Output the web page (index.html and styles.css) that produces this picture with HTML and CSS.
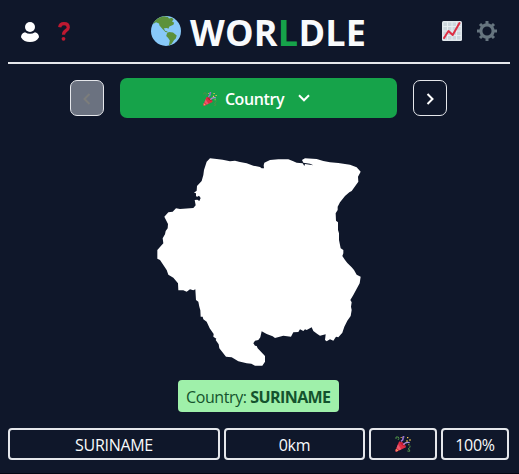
FILE: index.html
```html
<!DOCTYPE html>
<html lang="en">
<head>
<meta charset="utf-8">
<title>Worldle</title>
<link rel="stylesheet" href="styles.css">
</head>
<body>
<svg class="defs" aria-hidden="true">
  <symbol id="popper" viewBox="0 0 48 48">
    <path d="M12 17 1 44q0 3 3 3l29-13C33 27 21 15 12 17Z" fill="#dd2e44"/>
    <path d="m9 25-4 10 8 8 6-3ZM4 38l-3 6q0 3 3 3l5-2Z" fill="#ea596e"/>
    <path d="m3 40 5 5" stroke="#ffcc4d" stroke-width="3"/>
    <path d="M15 19c7 1 15 8 16 13-7-1-16-8-16-13Z" fill="#be1931"/>
    <path d="M18 16q7-4 6-9t4-6" fill="none" stroke="#9674cc" stroke-width="5"/>
    <path d="M3 9V3h7q4 4-1 9M37 45l7 1q2-6-5-7l6-5v-5" fill="none" stroke="#4f9148" stroke-width="3"/>
    <path d="M25 26q8-9 19-6" fill="none" stroke="#aa8ed6" stroke-width="4"/>
    <path d="M36 3h4v4h-4ZM43 10h4v4h-4ZM34 13h4v4h-4ZM17 3h3v3h-3ZM40 25h3v3h-3Z" fill="#ffcc4d"/>
  </symbol>
</svg>
<header class="header">
  <div class="actions">
    <svg class="user" viewBox="0 0 18 20"><circle cx="9" cy="5" r="5"/><path d="M4 10.200Q9 13.200 14 10.200C17 11 18 13.200 18 15.200C16 18.500 13 20 9 20S2 18.500 0 15.200C0 13 1 11 4 10.200Z"/></svg>
    <svg class="help" viewBox="0 0 12 19"><path d="M1.700 5.300C2 2.600 4 1.700 6 1.700c2.600 0 4.300 1.400 4.300 3.700C10.300 8.600 5.500 8.300 5.500 12.700"/><circle cx="5.500" cy="16.800" r="1.900"/></svg>
  </div>
  <h1 class="title">
    <svg class="globe" viewBox="0 0 30 30"><circle cx="15" cy="15" r="15" fill="#88c9f9"/><path d="M4.800 4Q8 .9 13 .2l4 .7 1 1.600 3-.7 1.500 2-1.600 1.500 2.200 1.400-.7 2-4 1.800-1 2.200-1.400-.8-3 .3 1 2.500 1.700.6 1.800 1.200-3-.6-3-2.800L8.500 9.500 8 7.500 5 6.300 1.900 8.200Q3 5.800 4.800 4ZM16 17.200l2-1.300 4 .7 3.700 3-.9 3-1.700 1.400-2.600 4-2.700 1.500 1-5-1.600-2.600-2-2Z" fill="#5c913b"/></svg>
    <span class="name">WOR<span class="accent">L</span>DLE</span>
  </h1>
  <div class="actions right">
    <svg class="chart" viewBox="0 0 20 20"><rect width="20" height="20" rx="1.500" fill="#e1e8ed"/><path d="M1.500 1.500h17v17h-17Z" fill="#ccd6dd"/><path d="M5.500 1v18M10 1v18M14.500 1v18M1 5.500h18M1 10h18M1 14.500h18" stroke="#e7edf1"/><path d="m2 17 4.500-7 4.200 4L17.500 2" fill="none" stroke="#dd2e44" stroke-width="2" stroke-linejoin="round" stroke-linecap="round"/></svg>
    <svg class="gear" viewBox="0 0 20 20"><path d="M10 0v4M10 16v4M0 10h4M16 10h4M3 3l2.800 2.800M14.200 14.200 17 17M3 17l2.800-2.800M14.200 5.800 17 3" stroke-width="3"/><circle cx="10" cy="10" r="6.100" stroke-width="3.100"/></svg>
  </div>
</header>
<main>
  <nav class="rounds">
    <button class="step disabled" aria-label="Previous"><svg viewBox="0 0 8 12"><path d="M6.500 1 1.500 6l5 5"/></svg></button>
    <button class="round"><svg class="party"><use href="#popper"/></svg><span class="round-name">Country</span><svg class="down" viewBox="0 0 12 8"><path d="m1 1.300 5 5 5-5"/></svg></button>
    <button class="step" aria-label="Next"><svg viewBox="0 0 8 12"><path d="m1.500 1 5 5-5 5"/></svg></button>
  </nav>
  <svg class="country" viewBox="0 0 648 660"><path d="M180 25 200 27 218 29 240 34 255 32 270 36 290 40 310 47 330 51 335 55 342 55 341 46 343 38 360 30 385 28 415 28 430 34 440 38 458 40 463 48 465 42 490 46 480 41 460 38 456 30 465 25 500 27 520 33 540 37 565 39 600 44 620 52 632 65 624 80 625 95 605 123 598 127 585 138 570 157 563 170 563 180 557 190 558 212 564 217 564 240 567 250 567 270 572 295 580 300 580 310 577 318 585 330 592 339 605 352 612 360 620 374 632 380 629 400 610 435 601 450 605 457 603 470 605 480 602 498 592 512 583 530 577 548 565 562 558 560 550 572 540 568 530 574 525 570 527 553 510 557 502 552 490 543 485 532 470 540 465 538 460 543 450 538 445 546 430 547 423 560 400 557 375 564 368 559 350 552 335 544 331 562 325 570 315 572 310 580 315 587 320 588 323 595 345 618 345 635 337 647 315 647 304 641 290 640 265 634 245 622 228 620 208 595 206 583 197 570 199 566 190 560 191 552 179 535 170 515 160 508 158 500 152 500 151 481 148 470 145 455 138 450 136 418 130 421 120 418 110 425 100 421 85 421 84 400 70 383 55 374 50 360 30 330 22 326 22 300 40 280 38 265 45 253 47 243 53 235 54 222 43 200 55 187 68 185 78 175 90 177 130 174 137 166 134 150 142 149 148 153 152 144 147 137 142 140 138 139 138 130 132 128 140 122 141 108 155 93 160 75 162 60 170 35Z"/></svg>
  <div class="answer">Country: <b>SURINAME</b></div>
  <div class="guess">
    <div class="cell place"><span>SURINAME</span></div>
    <div class="cell distance"><span>0km</span></div>
    <div class="cell"><svg class="party"><use href="#popper"/></svg></div>
    <div class="cell percent"><span>100%</span></div>
  </div>
</main>
</body>
</html>
```
FILE: styles.css
```css
* { box-sizing: border-box; }
html { background: #0f172a; }
body {
  margin: 0;
  height: 474px;
  padding: 0 9px 0 8px;
  overflow: hidden;
  border-bottom: 1px solid #030613;
  background: #0f172a;
  color: #f8fafc;
  font: 16px/24px "Open Sans", "Noto Sans", sans-serif;
}
.defs { position: absolute; width: 0; height: 0; }
svg { display: block; flex: none; }
.header {
  height: 64px;
  display: grid;
  grid-template-columns: 1fr auto 1fr;
  align-items: center;
  padding-right: 2px;
  border-bottom: 2px solid #e5e7eb;
}
.actions { display: flex; align-items: center; gap: 19px; padding-left: 13px; }
.actions.right { justify-content: flex-end; gap: 15px; padding: 0 11px 0 0; }
.user { width: 18px; height: 20px; margin-top: 2px; fill: #fff; }
.help { width: 12px; height: 19px; fill: none; stroke: #be1931; stroke-width: 3.2; }
.help circle { fill: #be1931; stroke: none; }
.title { display: flex; align-items: center; gap: 9px; margin: 0; font-size: 36px; line-height: 40px; font-weight: 700; }
.globe { width: 30px; height: 30px; }
.name { width: 175px; letter-spacing: .2px; white-space: nowrap; margin-top: 3px; }
.accent { color: #16a34a; }
.chart { width: 20px; height: 20px; }
.gear { width: 20px; height: 20px; fill: none; stroke: #66757f; }
.rounds { display: flex; justify-content: center; align-items: center; gap: 16px; margin-top: 14px; padding-right: 2px; }
button { font: inherit; color: #fff; padding: 0; }
.step {
  width: 34px;
  height: 36px;
  display: grid;
  place-items: center;
  border: 1px solid #e5e7eb;
  border-radius: 7px;
  background: transparent;
}
.step svg { width: 8px; height: 12px; margin-top: 2px; }
.step path, .down path { fill: none; stroke: #fff; stroke-width: 2; }
.step.disabled { background: #6b7280; }
.step.disabled path { stroke: #7c7d7b; }
.round {
  width: 277px;
  height: 40px;
  display: flex;
  align-items: center;
  justify-content: center;
  padding-right: 4px;
  border: 0;
  border-radius: 7px;
  background: #16a34a;
  font-weight: 600;
}
.round .party { width: 14px; height: 14px; margin: 1px 8px 0 0; }
.round-name { width: 60px; white-space: nowrap; margin-top: 2px; letter-spacing: -.4px; }
.down { width: 12px; height: 8px; margin: 0 0 1px 13px; }
.country { width: 216px; height: 220px; margin: 32px 0 0 142px; fill: #fff; }
.answer {
  width: 161px;
  height: 32px;
  margin: 10px 0 0 170px;
  padding: 5px 0 3px 8px;
  border-radius: 4px;
  background: #9ff0aa;
  color: #14532d;
  white-space: nowrap;
  letter-spacing: -.4px;
}
.answer b { letter-spacing: -.6px; }
.guess { display: grid; grid-template-columns: 212px 141px 68px 68px; gap: 4px; margin-top: 16px; }
.cell {
  height: 32px;
  display: flex;
  align-items: center;
  justify-content: center;
  border: 2px solid #e5e7eb;
  border-radius: 4px;
}
.cell span { padding-top: 2px; letter-spacing: -.3px; }
.cell .party { width: 16px; height: 16px; }
```
